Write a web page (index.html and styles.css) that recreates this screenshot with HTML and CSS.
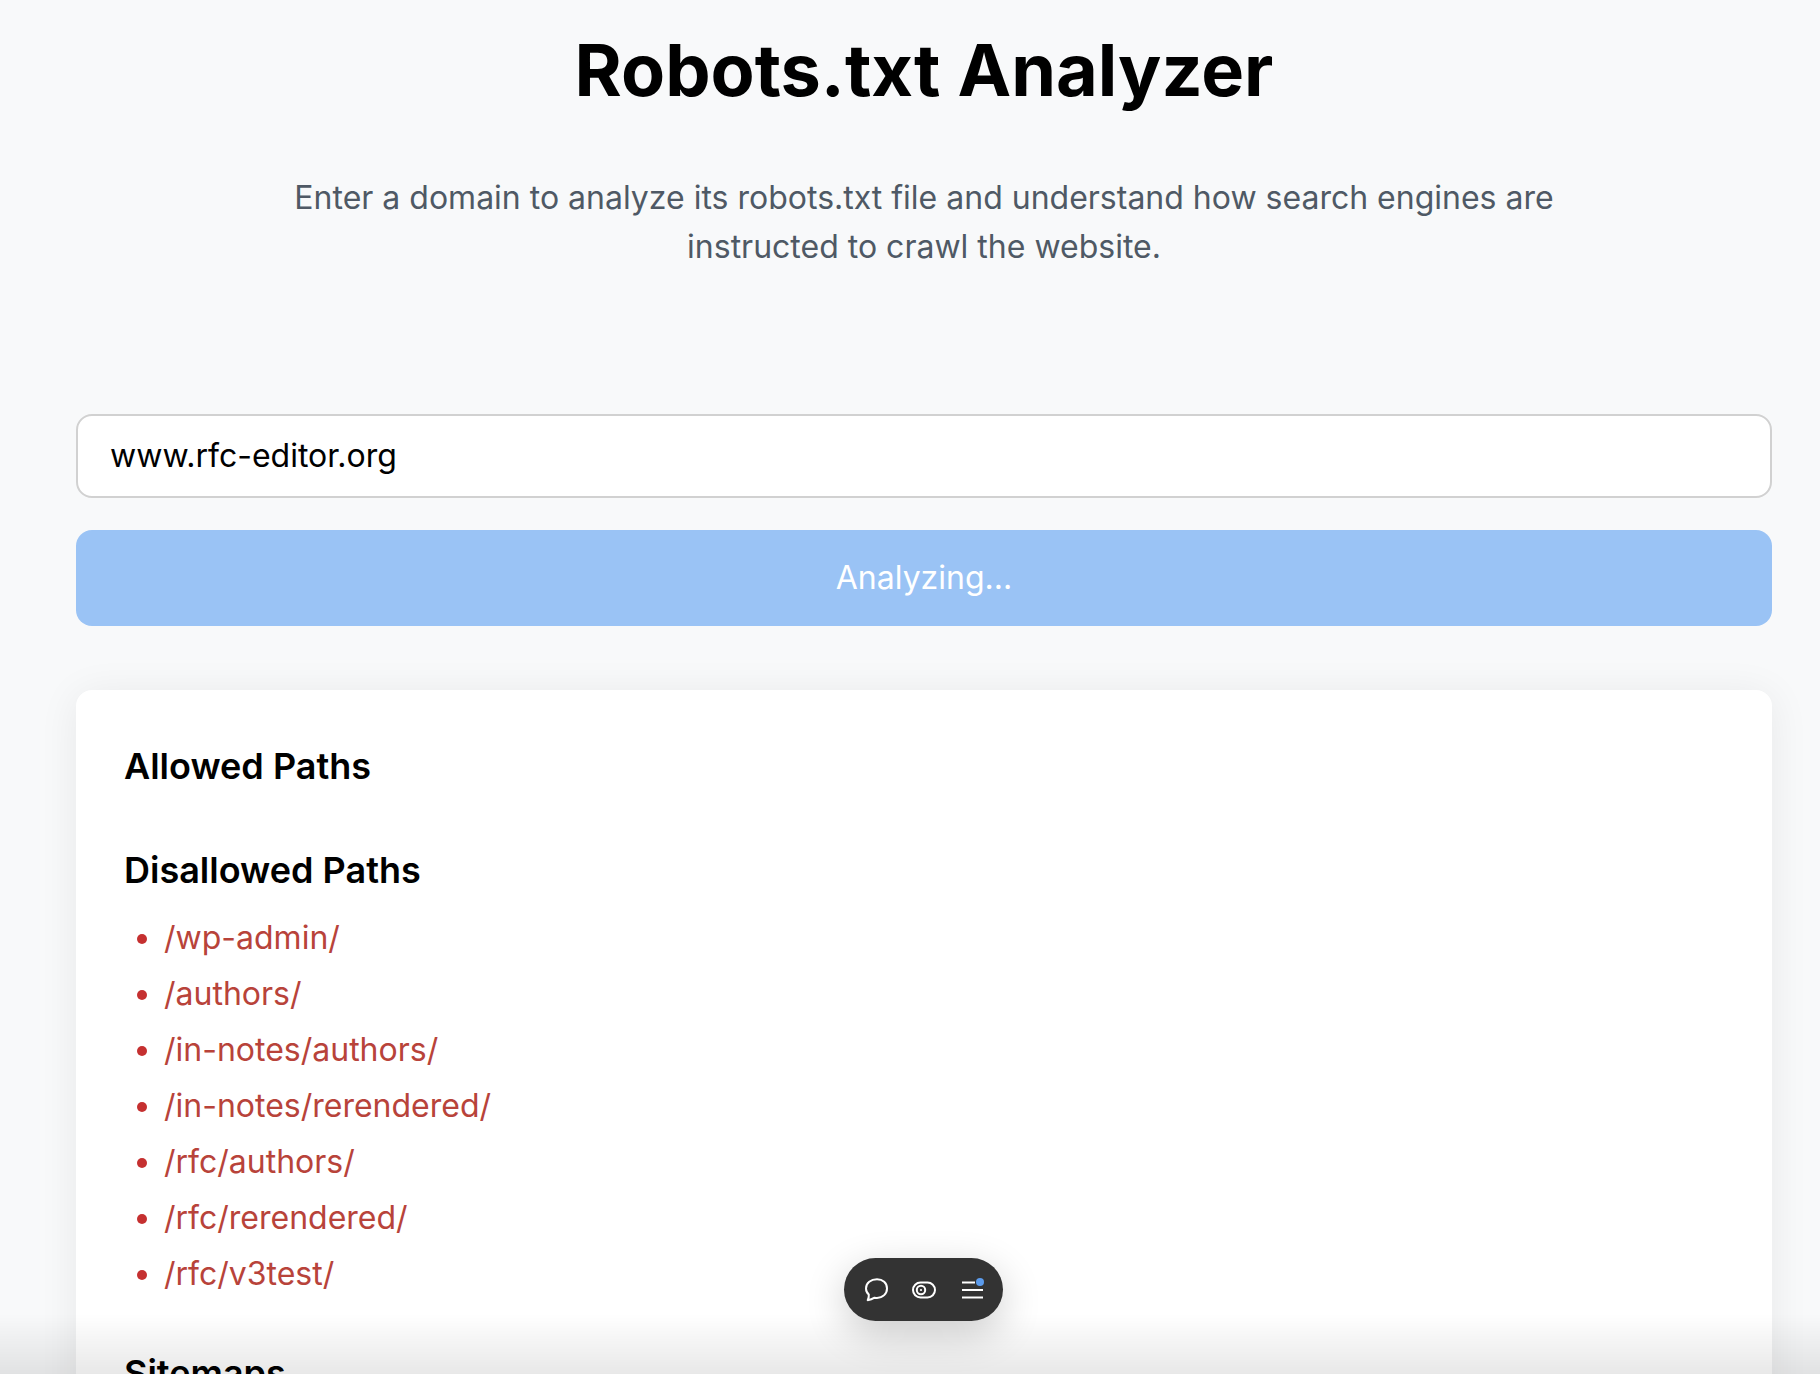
FILE: index.html
```html
<!DOCTYPE html>
<html lang="en">
<head>
<meta charset="utf-8">
<title>Robots.txt Analyzer</title>
<link rel="stylesheet" href="styles.css">
</head>
<body>
<main class="page">
  <header class="intro">
    <h1 class="title">Robots.txt Analyzer</h1>
    <p class="lead">Enter a domain to analyze its robots.txt file and understand how search engines are instructed to crawl the website.</p>
  </header>
  <form class="form">
    <input class="domain" type="text" value="www.rfc-editor.org">
    <button class="submit" type="button">Analyzing...</button>
  </form>
  <section class="card">
    <h2 class="heading">Allowed Paths</h2>
    <h2 class="heading">Disallowed Paths</h2>
    <ul class="paths">
      <li>/wp-admin/</li>
      <li>/authors/</li>
      <li>/in-notes/authors/</li>
      <li>/in-notes/rerendered/</li>
      <li>/rfc/authors/</li>
      <li>/rfc/rerendered/</li>
      <li>/rfc/v3test/</li>
    </ul>
    <h2 class="heading">Sitemaps</h2>
  </section>
</main>
<div class="fade"></div>
<div class="toolbar">
  <svg class="tool" width="24" height="24" viewBox="0 0 24 24" fill="none" stroke="#fff" stroke-width="2" stroke-linejoin="round" stroke-linecap="round"><path d="M13 1.200C6.900 1.200 2 5 2 10.400c0 2.500 1 4.600 2.800 6.100.2 1.800-.2 3.800-1.100 5.700 2.700-.3 4.900-1.200 6.900-2.500 .8.100 1.600.2 2.400.2 5.800 0 10-4.200 10-9.500C23 5 18.800 1.200 13 1.200Z"/></svg>
  <svg class="tool" width="24" height="24" viewBox="0 0 24 24" fill="none" stroke="#fff" stroke-width="2"><rect x="1" y="4.500" width="22" height="15" rx="7.500"/><circle cx="9" cy="12" r="4.200" stroke-width="2"/><circle cx="9" cy="12" r="1.100" fill="#fff" stroke="none"/></svg>
  <svg class="tool" width="24" height="24" viewBox="0 0 24 24" fill="none" stroke="#fff" stroke-width="2"><path d="M2 4.500h13M2 12h21M2 19.500h21"/><circle cx="20" cy="4" r="4" fill="#5b9bec" stroke="none"/></svg>
</div>
</body>
</html>
```
FILE: styles.css
```css
* { box-sizing: border-box; }
html, body { margin: 0; height: 100%; overflow: hidden; }
body {
  background: #f8f9fa;
  font-family: Inter, "Liberation Sans", sans-serif;
  color: #000;
}
.page { padding: 0 48px 0 76px; }
.intro { display: flex; flex-direction: column; align-items: center; }
.title {
  margin: 24px 0 0;
  font-size: 72px;
  line-height: 92px;
  font-weight: 700;
  text-align: center;
}
.lead {
  margin: 57px 0 0;
  width: 1290px;
  font-size: 32px;
  line-height: 49px;
  color: #4f5965;
  text-align: center;
}
.form { margin-top: 143px; display: flex; flex-direction: column; gap: 32px; }
.domain {
  display: block;
  width: 100%;
  height: 84px;
  padding: 0 32px 2px;
  border: 2px solid #d1d1d1;
  border-radius: 16px;
  background: #fff;
  font: 32px Inter, sans-serif;
  color: #000;
}
.submit {
  height: 96px;
  padding: 0 0 2px;
  border: 0;
  border-radius: 16px;
  background: #9ac3f5;
  color: #fff;
  font: 32px Inter, sans-serif;
}
.card {
  margin-top: 64px;
  padding: 54px 48px 48px;
  background: #fff;
  border-radius: 16px;
  box-shadow: 0 4px 40px rgba(0, 0, 0, 0.07);
}
.heading {
  margin: 0;
  font-size: 36px;
  line-height: 44px;
  font-weight: 600;
}
.heading + .heading { margin-top: 60px; }
.paths {
  margin: 18px 0 0;
  padding: 0 0 0 40px;
  color: #b8433a;
  font-size: 32px;
  line-height: 56px;
}
.paths + .heading { margin-top: 49px; }
.paths li::marker { color: #c53030; }
.fade {
  position: fixed;
  left: 0;
  right: 0;
  bottom: 0;
  height: 60px;
  background: linear-gradient(to bottom, rgba(0,0,0,0), rgba(0,0,0,0.09));
  pointer-events: none;
}
.toolbar {
  position: fixed;
  left: 844px;
  top: 1258px;
  height: 63px;
  border-radius: 32px;
  background: #333;
  display: flex;
  align-items: center;
  gap: 24px;
  padding: 0 19px 0 20px;
  box-shadow: 0 12px 40px rgba(0, 0, 0, 0.2);
}
.tool { display: block; }
```
